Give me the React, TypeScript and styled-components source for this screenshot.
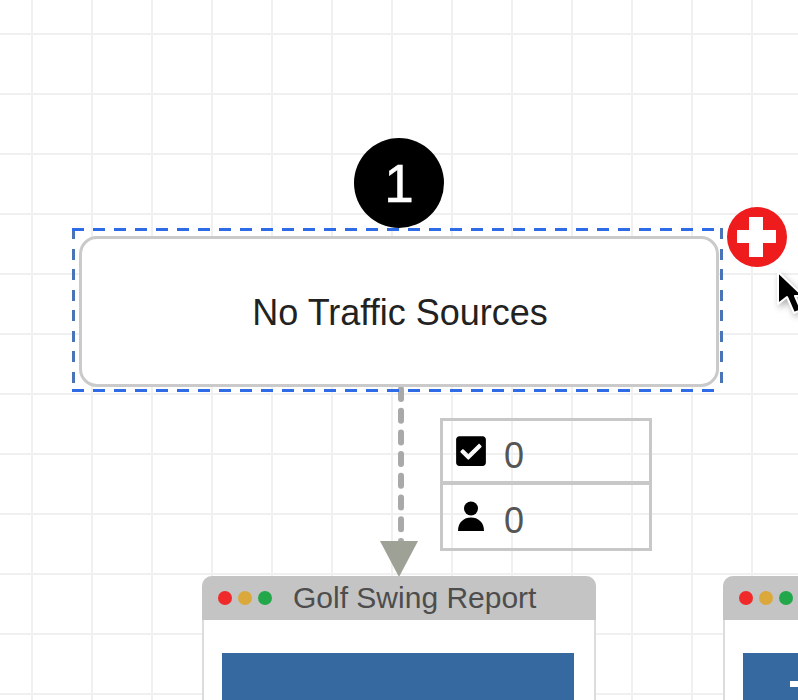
import React from "react";
import styled, { createGlobalStyle } from "styled-components";
import { FaCheckSquare } from "react-icons/fa";

const GlobalStyle = createGlobalStyle`
  html, body {
    margin: 0;
    padding: 0;
    background: #fff;
  }
  body {
    font-family: "Liberation Sans", Arial, sans-serif;
  }
`;

// Funnel editor canvas, nodes are placed freely on the grid
const Canvas = styled.div`
  position: relative;
  width: 798px;
  height: 700px;
  overflow: hidden;
  background-color: #fff;
  background-image:
    linear-gradient(to right, #f0f0f0 2px, transparent 2px),
    linear-gradient(to bottom, #f0f0f0 2px, transparent 2px);
  background-size: 60px 60px;
  background-position: 31px 33px;
`;

const Selection = styled.div`
  position: absolute;
  left: 72px;
  top: 228px;
  width: 651px;
  height: 164px;
  box-sizing: border-box;
  padding: 8px 4px 5px 7px;
  display: flex;
  --dash-h: repeating-linear-gradient(to right, #2f6be6 0 12px, transparent 12px 21px);
  --dash-v: repeating-linear-gradient(to bottom, #4a74b8 0 11px, transparent 11px 20.5px);
  background-image: var(--dash-h), var(--dash-h), var(--dash-v), var(--dash-v);
  background-size: 100% 3px, 100% 3px, 3px 100%, 3px 100%;
  background-position: 0 0, 0 100%, 0 0, 100% 0;
  background-repeat: no-repeat;
`;

const SourceCard = styled.div`
  flex: 1;
  display: flex;
  align-items: center;
  justify-content: center;
  padding: 3px 0 0 2px;
  background: #fff;
  border: 3px solid #cacaca;
  border-radius: 18px;
  font-size: 36px;
  color: #222;
`;

const NumberBadge = styled.div`
  position: absolute;
  left: 354px;
  top: 138px;
  width: 90px;
  height: 90px;
  border-radius: 50%;
  background: #000;
  color: #fff;
  display: flex;
  align-items: center;
  justify-content: center;
  font-size: 53px;
  -webkit-text-stroke: 0.5px #fff;
`;

const AddButton = styled.div`
  position: absolute;
  left: 727px;
  top: 207px;
  width: 60px;
  height: 60px;
  border-radius: 50%;
  background: #ee1c1c;
`;

const Cursor = styled.svg`
  position: absolute;
  left: 770px;
  top: 264px;
  filter: drop-shadow(2px 3px 3px rgba(0, 0, 0, 0.3));
`;

const Connector = styled.svg`
  position: absolute;
  left: 398px;
  top: 385px;
`;

const ArrowHead = styled.div`
  position: absolute;
  left: 380px;
  top: 541px;
  width: 0;
  height: 0;
  border-left: 19px solid transparent;
  border-right: 19px solid transparent;
  border-top: 36px solid #9ea196;
`;

const StatsBox = styled.div`
  position: absolute;
  left: 440px;
  top: 418px;
  width: 212px;
  height: 133px;
  box-sizing: border-box;
  display: grid;
  grid-template-rows: 1fr 1fr;
  border: 3px solid #c8c8c8;
`;

const StatRow = styled.div<{ $divider?: boolean }>`
  display: flex;
  align-items: center;
  gap: 17px;
  padding-left: 12px;
  border-bottom: ${({ $divider }) => ($divider ? "4px solid #c8c8c8" : "none")};
`;

const StatIcon = styled.span`
  width: 32px;
  height: 32px;
  display: flex;
  align-items: center;
  justify-content: center;
  color: #000;
`;

const StatValue = styled.span`
  margin-top: 10px;
  font-size: 36px;
  color: #555;
`;

const PageCard = styled.div<{ $left: number }>`
  position: absolute;
  left: ${({ $left }) => $left}px;
  top: 576px;
  width: 394px;
  height: 160px;
  box-sizing: border-box;
  display: flex;
  flex-direction: column;
  background: #fff;
  border: 2px solid #dcdcdc;
  border-top: none;
  border-radius: 10px 10px 0 0;
`;

const TitleBar = styled.div`
  height: 44px;
  flex: none;
  margin: 0 -2px;
  display: flex;
  align-items: center;
  padding-left: 16px;
  background: #c4c4c4;
  border-radius: 10px 10px 0 0;
`;

const Dots = styled.div`
  display: flex;
  gap: 6px;
  margin-right: 21px;
`;

const Dot = styled.span<{ $color: string }>`
  width: 14px;
  height: 14px;
  border-radius: 50%;
  background: ${({ $color }) => $color};
`;

const PageTitle = styled.span`
  font-size: 30px;
  color: #4d4d4d;
  white-space: nowrap;
`;

const Thumb = styled.div`
  position: relative;
  margin: 33px 20px 0 18px;
  flex: 1;
  background: #36699f;
`;

const ThumbMark = styled.span`
  position: absolute;
  left: 47px;
  top: 28px;
  width: 30px;
  height: 6px;
  background: #fff;
`;

export default function App() {
  return (
    <Canvas>
      <GlobalStyle />
      <Connector width="6" height="156" viewBox="0 0 6 156">
        <line
          x1="3"
          y1="4"
          x2="3"
          y2="156"
          stroke="#a9a9a9"
          strokeWidth="6"
          strokeLinecap="round"
          strokeDasharray="10 11.700"
        />
      </Connector>
      <ArrowHead />
      <Selection>
        <SourceCard>No Traffic Sources</SourceCard>
      </Selection>
      <NumberBadge>1</NumberBadge>
      <AddButton>
        <svg width="60" height="60" viewBox="0 0 60 60">
          <path d="M22 10h14v13h13v13H36v14H22V36H10V23h12z" fill="#fff" />
        </svg>
      </AddButton>
      <Cursor width="28" height="56" viewBox="0 0 28 56">
        <path
          d="M8 8v32l9-7 7 16 7-3-6-14h8z"
          fill="#000"
          stroke="#fff"
          strokeWidth="2"
          strokeLinejoin="round"
        />
      </Cursor>
      <StatsBox>
        <StatRow $divider>
          <StatIcon>
            <FaCheckSquare size={34} />
          </StatIcon>
          <StatValue>0</StatValue>
        </StatRow>
        <StatRow>
          <StatIcon>
            <svg width="28" height="30" viewBox="0 0 28 30">
              <circle cx="14" cy="7.5" r="7" fill="#000" />
              <path d="M1 30c0-9 6-13.500 13-13.500S27 21 27 30z" fill="#000" />
            </svg>
          </StatIcon>
          <StatValue>0</StatValue>
        </StatRow>
      </StatsBox>
      <PageCard $left={202}>
        <TitleBar>
          <Dots>
            <Dot $color="#f02a2a" />
            <Dot $color="#dba83c" />
            <Dot $color="#22a84a" />
          </Dots>
          <PageTitle>Golf Swing Report</PageTitle>
        </TitleBar>
        <Thumb />
      </PageCard>
      <PageCard $left={723}>
        <TitleBar>
          <Dots>
            <Dot $color="#f02a2a" />
            <Dot $color="#dba83c" />
            <Dot $color="#22a84a" />
          </Dots>
        </TitleBar>
        <Thumb>
          <ThumbMark />
        </Thumb>
      </PageCard>
    </Canvas>
  );
}
